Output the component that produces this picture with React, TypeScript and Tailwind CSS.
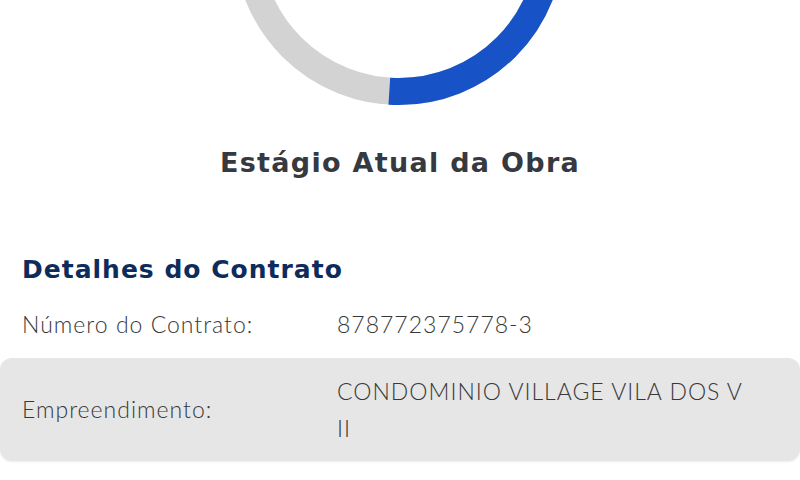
import React from "react";

type Row = {
  label: string;
  value: React.ReactNode;
  height: string;
  shaded?: boolean;
};

const rows: Row[] = [
  { label: "Número do Contrato:", value: "878772375778-3", height: "h-[68px]" },
  {
    label: "Empreendimento:",
    value: (
      <>
        CONDOMINIO VILLAGE VILA DOS V
        <br />
        II
      </>
    ),
    height: "h-[103px]",
    shaded: true,
  },
  { label: "Data Prevista para Entrega das Chaves:", value: "30/06/2025", height: "h-[93px]" },
];

function ProgressRing({ percent }: { percent: number }) {
  const r = 151.5;
  const circ = 2 * Math.PI * r;
  return (
    <svg width="340" height="106" viewBox="0 0 340 106" className="block">
      <circle cx="169" cy="-60" r={r} fill="none" stroke="#d3d3d3" strokeWidth="27" />
      <circle
        cx="169"
        cy="-60"
        r={r}
        fill="none"
        stroke="#1753c6"
        strokeWidth="27"
        strokeDasharray={`${(circ * percent) / 100} ${circ}`}
        transform="rotate(-90 169 -60)"
      />
    </svg>
  );
}

export default function App() {
  return (
    <div className="w-[800px] h-[480px] overflow-hidden bg-white font-['Lato','Liberation_Sans',sans-serif]">
      <div className="flex justify-center">
        <ProgressRing percent={51} />
      </div>

      <h1 className="mt-[40px] text-center font-['DejaVu_Sans',sans-serif] text-[27px] leading-[34px] font-bold tracking-[1.3px] text-[#363940]">
        Estágio Atual da Obra
      </h1>

      <h2 className="mt-[74px] px-[22px] font-['DejaVu_Sans',sans-serif] text-[25px] leading-[32px] font-bold tracking-[1px] text-[#0e2c5b]">
        Detalhes do Contrato
      </h2>

      <div className="mt-[4px]">
        {rows.map((row) => (
          <div
            key={row.label}
            className={`flex items-center px-[22px] text-[23px] leading-[37px] font-light tracking-[1px] text-[#383838] ${row.height} ${
              row.shaded ? "bg-[#e6e6e6] rounded-[12px] shadow-[0_1px_2px_rgba(0,0,0,0.08)]" : ""
            }`}
          >
            <span className="w-[300px] mr-[15px] shrink-0">{row.label}</span>
            <span className="flex-1">{row.value}</span>
          </div>
        ))}
      </div>
    </div>
  );
}
